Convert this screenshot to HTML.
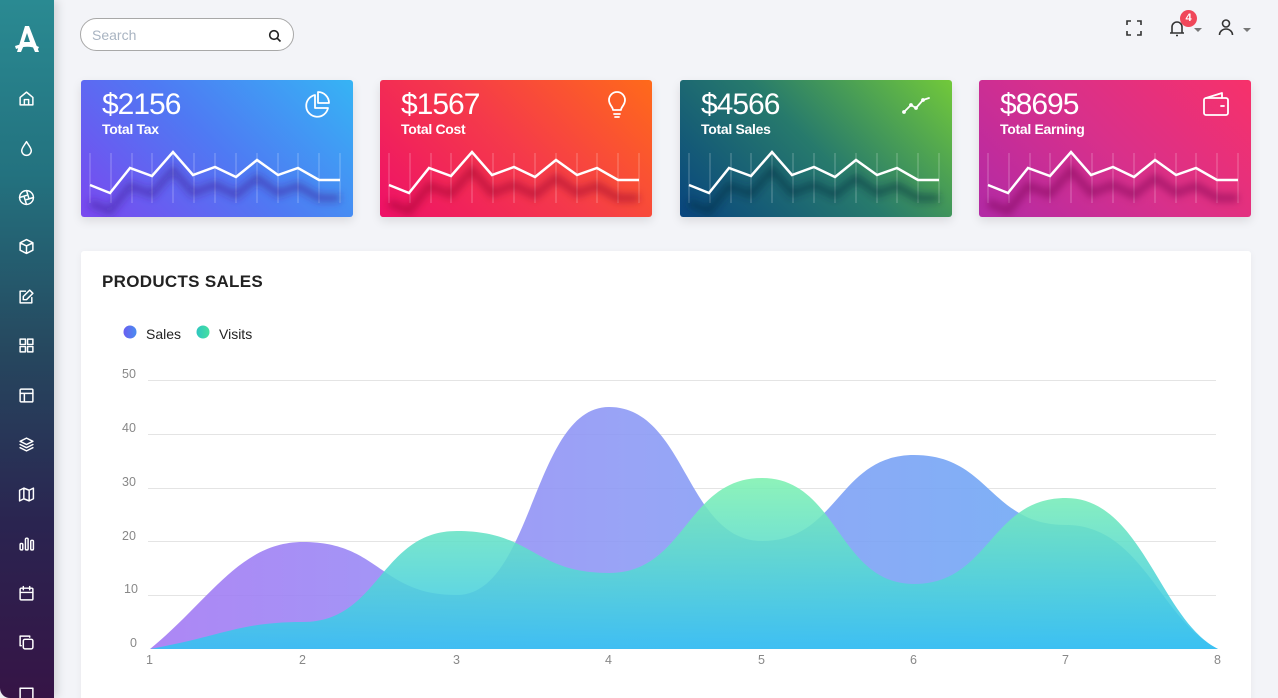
<!DOCTYPE html>
<html><head><meta charset="utf-8"><style>
*{margin:0;padding:0;box-sizing:border-box}
html,body{width:1278px;height:698px;overflow:hidden}
body{background:#f3f4f8;font-family:"Liberation Sans",sans-serif;position:relative}
.side{position:absolute;left:0;top:0;width:54px;height:698px;border-radius:0 0 0 10px;background:linear-gradient(180deg,#2a8a92 0%,#23727f 25%,#26485f 50%,#2a2450 75%,#361446 100%);box-shadow:3px 0 10px rgba(0,0,0,.15)}
.side svg{position:absolute;left:18px;width:17px;height:17px;fill:none;stroke:#fff;stroke-width:1.4;stroke-linecap:round;stroke-linejoin:round}
.search{position:absolute;left:80px;top:18px;width:214px;height:33px;border:1px solid #a8a8a8;border-radius:17px;background:#fff}
.search span{position:absolute;left:11px;top:8px;font-size:14px;color:#a9b4c2}
.card{position:absolute;top:80px;width:272px;height:137px;border-radius:3px;box-shadow:0 4px 10px rgba(0,0,0,.1);overflow:hidden}
.card .v{position:absolute;left:21px;top:8px;color:#fff;font-size:30px;letter-spacing:-1px}
.card .l{position:absolute;left:21px;top:41px;color:#fff;font-size:14px;font-weight:bold;letter-spacing:-0.3px}
.card svg.sp{position:absolute;left:0;top:0}
.card svg.ic{position:absolute;right:20px;top:10px;width:30px;height:30px;fill:none;stroke:#fff;stroke-width:1.8;stroke-linecap:round;stroke-linejoin:round}
.chart{position:absolute;left:81px;top:251px;width:1170px;height:460px;background:#fff;border-radius:3px;box-shadow:0 2px 8px rgba(0,0,0,.05)}
.chart h2{position:absolute;left:21px;top:21px;font-size:17px;font-weight:bold;color:#222;letter-spacing:.3px}
</style></head><body>
<svg width="0" height="0" style="position:absolute"><defs><filter id="bl" x="-10%" y="-50%" width="120%" height="200%"><feGaussianBlur stdDeviation="4"/></filter></defs></svg>
<div class="side">
<svg style="left:12px;top:24px;width:30px;height:30px;stroke:none;fill:#fff" viewBox="0 0 30 30"><path d="M13 2h4l10 26h-4l-3-7h-8l-3 7H5z M12 18h6l-3-9z"/><path d="M3 22c8-3 16-3 24 1l-1 2c-7-3-14-3-22 0z"/></svg>
<svg style="top:90px" viewBox="0 0 16 16"><path d="M2 7l6-5 6 5v7H2z M6 14V9h4v5"/></svg>
<svg style="top:140px" viewBox="0 0 16 16"><path d="M8 1.5C6 5 3.5 7.5 3.5 10a4.5 4.5 0 009 0C12.5 7.5 10 5 8 1.5z"/></svg>
<svg style="top:189px" viewBox="0 0 16 16"><circle cx="8" cy="8" r="6.5"/><path d="M8 1.5L10 8M14.5 8L8 10M8 14.5L6 8M1.5 8L8 6"/></svg>
<svg style="top:238px" viewBox="0 0 16 16"><path d="M8 1.5l6 3v7l-6 3-6-3v-7z M2 4.5l6 3 6-3 M8 7.5v7"/></svg>
<svg style="top:288px" viewBox="0 0 16 16"><path d="M13 9v5H2V3h5 M11 2l3 3-6 6H5V8z"/></svg>
<svg style="top:337px" viewBox="0 0 16 16"><rect x="2" y="2" width="5" height="5"/><rect x="9" y="2" width="5" height="5"/><rect x="2" y="9" width="5" height="5"/><rect x="9" y="9" width="5" height="5"/></svg>
<svg style="top:387px" viewBox="0 0 16 16"><rect x="2" y="2" width="12" height="12" rx="1"/><path d="M2 6h12M6 6v8"/></svg>
<svg style="top:436px" viewBox="0 0 16 16"><path d="M8 2l6 3-6 3-6-3z M2 8l6 3 6-3 M2 11l6 3 6-3"/></svg>
<svg style="top:486px" viewBox="0 0 16 16"><path d="M1.5 4l4-2 5 2 4-2v10l-4 2-5-2-4 2z M5.5 2v10M10.5 4v10"/></svg>
<svg style="top:535px" viewBox="0 0 16 16"><rect x="2" y="8" width="2.5" height="6" rx="1"/><rect x="7" y="3" width="2.5" height="11" rx="1"/><rect x="12" y="5" width="2.5" height="9" rx="1"/></svg>
<svg style="top:585px" viewBox="0 0 16 16"><rect x="2" y="3" width="12" height="11" rx="1"/><path d="M2 7h12M5 1.5v3M11 1.5v3"/></svg>
<svg style="top:634px" viewBox="0 0 16 16"><rect x="5" y="5" width="9" height="9" rx="1.5"/><path d="M11 3V2H2v9h1"/></svg>
<svg style="top:684px" viewBox="0 0 16 16"><path d="M2 14V4h12v10"/></svg>
</div>

<div class="search"><span>Search</span>
<svg style="position:absolute;right:11px;top:10px" width="14" height="14" viewBox="0 0 14 14" fill="none" stroke="#222" stroke-width="1.6"><circle cx="6" cy="6" r="4.3"/><path d="M9.2 9.2L12.5 12.5"/></svg></div>

<svg style="position:absolute;left:1126px;top:20px" width="16" height="16" viewBox="0 0 16 16" fill="none" stroke="#333" stroke-width="1.6"><path d="M1 5V1h4M11 1h4v4M15 11v4h-4M5 15H1v-4"/></svg>
<svg style="position:absolute;left:1168px;top:18px" width="20" height="20" viewBox="0 0 20 20" fill="none" stroke="#333" stroke-width="1.6"><path d="M4 15V9a5 5 0 0110 0v6h2H2h2M8 17.5h2"/></svg>
<div style="position:absolute;left:1180px;top:10px;width:17px;height:17px;border-radius:50%;background:#f0475a;color:#fff;font-size:11px;font-weight:bold;text-align:center;line-height:17px">4</div>
<div style="position:absolute;left:1194px;top:28px;border:4px solid transparent;border-top:4px solid #777"></div>
<svg style="position:absolute;left:1217px;top:18px" width="18" height="18" viewBox="0 0 18 18" fill="none" stroke="#333" stroke-width="1.6"><circle cx="9" cy="5.5" r="3.5"/><path d="M2.5 17a6.5 6 0 0113 0"/></svg>
<div style="position:absolute;left:1243px;top:28px;border:4px solid transparent;border-top:4px solid #777"></div>

<div class="card" style="left:81px;background:linear-gradient(45deg,#7a48ef,#4f79f3 50%,#36b4f4)">
<svg class="sp" width="272" height="137"><g stroke="rgba(255,255,255,.3)" stroke-width="1"><path d="M9 73v50M30 73v50M51 73v50M71 73v50M92 73v50M113 73v50M134 73v50M155 73v50M176 73v50M197 73v50M217 73v50M238 73v50M259 73v50"/></g><polyline points="9,113 29,121 49,96 71,104 92,80 112,103 134,95 155,105 176,88 197,103 217,96 238,108 259,108" fill="none" stroke="rgba(60,30,150,.5)" stroke-width="8" filter="url(#bl)" transform="translate(0,10)"/><polyline points="9,105 29,113 49,88 71,96 92,72 112,95 134,87 155,97 176,80 197,95 217,88 238,100 259,100" fill="none" stroke="#fff" stroke-width="2.5"/></svg>
<div class="v">$2156</div><div class="l">Total Tax</div>
<svg class="ic" viewBox="0 0 30 30"><path d="M12 5a11 11 0 1 0 13 13H12z"/><path d="M15 2a11 11 0 0111 11H15z"/></svg></div>

<div class="card" style="left:380px;background:linear-gradient(45deg,#ee1068,#f53a4a 50%,#ff6a1a)">
<svg class="sp" width="272" height="137"><g stroke="rgba(255,255,255,.3)"><path d="M9 73v50M30 73v50M51 73v50M71 73v50M92 73v50M113 73v50M134 73v50M155 73v50M176 73v50M197 73v50M217 73v50M238 73v50M259 73v50"/></g><polyline points="9,113 29,121 49,96 71,104 92,80 112,103 134,95 155,105 176,88 197,103 217,96 238,108 259,108" fill="none" stroke="rgba(150,0,40,.5)" stroke-width="8" filter="url(#bl)" transform="translate(0,10)"/><polyline points="9,105 29,113 49,88 71,96 92,72 112,95 134,87 155,97 176,80 197,95 217,88 238,100 259,100" fill="none" stroke="#fff" stroke-width="2.5"/></svg>
<div class="v">$1567</div><div class="l">Total Cost</div>
<svg class="ic" viewBox="0 0 30 30"><path d="M11 20c0-3-4-5-4-10a8 8 0 0116 0c0 5-4 7-4 10z M12 24h6M13 27h4"/></svg></div>

<div class="card" style="left:680px;background:linear-gradient(45deg,#08457e,#277a6c 50%,#72c93a)">
<svg class="sp" width="272" height="137"><g stroke="rgba(255,255,255,.3)"><path d="M9 73v50M30 73v50M51 73v50M71 73v50M92 73v50M113 73v50M134 73v50M155 73v50M176 73v50M197 73v50M217 73v50M238 73v50M259 73v50"/></g><polyline points="9,113 29,121 49,96 71,104 92,80 112,103 134,95 155,105 176,88 197,103 217,96 238,108 259,108" fill="none" stroke="rgba(0,40,60,.5)" stroke-width="8" filter="url(#bl)" transform="translate(0,10)"/><polyline points="9,105 29,113 49,88 71,96 92,72 112,95 134,87 155,97 176,80 197,95 217,88 238,100 259,100" fill="none" stroke="#fff" stroke-width="2.5"/></svg>
<div class="v">$4566</div><div class="l">Total Sales</div>
<svg class="ic" viewBox="0 0 30 30"><path d="M2 22l7-7 5 3 7-8 6-2"/><circle cx="2" cy="22" r="1"/><circle cx="9" cy="15" r="1"/><circle cx="14" cy="18" r="1"/><circle cx="21" cy="10" r="1"/></svg></div>

<div class="card" style="left:979px;background:linear-gradient(45deg,#b22aa6,#d9308a 50%,#f7316a)">
<svg class="sp" width="272" height="137"><g stroke="rgba(255,255,255,.3)"><path d="M9 73v50M30 73v50M51 73v50M71 73v50M92 73v50M113 73v50M134 73v50M155 73v50M176 73v50M197 73v50M217 73v50M238 73v50M259 73v50"/></g><polyline points="9,113 29,121 49,96 71,104 92,80 112,103 134,95 155,105 176,88 197,103 217,96 238,108 259,108" fill="none" stroke="rgba(120,0,80,.5)" stroke-width="8" filter="url(#bl)" transform="translate(0,10)"/><polyline points="9,105 29,113 49,88 71,96 92,72 112,95 134,87 155,97 176,80 197,95 217,88 238,100 259,100" fill="none" stroke="#fff" stroke-width="2.5"/></svg>
<div class="v">$8695</div><div class="l">Total Earning</div>
<svg class="ic" viewBox="0 0 30 30"><rect x="3" y="8" width="24" height="17" rx="2"/><path d="M5 8l16-5v5M20 16h3"/></svg></div>

<div class="chart"><h2>PRODUCTS SALES</h2></div>
<svg style="position:absolute;left:0;top:0" width="1278" height="698">
<defs>
<linearGradient id="s" x1="0" x2="1" y1="0" y2="0"><stop offset="0" stop-color="#a479f4"/><stop offset=".45" stop-color="#8d9af5"/><stop offset="1" stop-color="#62aef4"/></linearGradient>
<linearGradient id="v" x1="0" x2="0" y1="0" y2="1"><stop offset="0" stop-color="#7ef1b0"/><stop offset="1" stop-color="#33c2f2"/></linearGradient>
<linearGradient id="d1" x1="0" x2="1"><stop offset="0" stop-color="#6a5ef0"/><stop offset="1" stop-color="#4a8cf0"/></linearGradient>
<linearGradient id="d2" x1="0" x2="1"><stop offset="0" stop-color="#2ec6c0"/><stop offset="1" stop-color="#46e0a0"/></linearGradient>
</defs>
<circle cx="130" cy="332" r="6.5" fill="url(#d1)"/><text x="146" y="339" font-size="14" fill="#222" font-family="Liberation Sans">Sales</text>
<circle cx="203" cy="332" r="6.5" fill="url(#d2)"/><text x="219" y="339" font-size="14" fill="#222" font-family="Liberation Sans">Visits</text>
<g stroke="#e4e4e4" stroke-width="1"><path d="M148 380.5H1216M148 434.5H1216M148 488.5H1216M148 541.5H1216M148 595.5H1216"/></g>
<g font-size="12.5" fill="#888" font-family="Liberation Sans"><text x="122" y="378">50</text><text x="122" y="432">40</text><text x="122" y="486">30</text><text x="122" y="540">20</text><text x="124" y="593">10</text><text x="130" y="647">0</text>
<text x="146" y="664">1</text><text x="299" y="664">2</text><text x="453" y="664">3</text><text x="605" y="664">4</text><text x="758" y="664">5</text><text x="910" y="664">6</text><text x="1062" y="664">7</text><text x="1214" y="664">8</text></g>
<path d="M150,649 C210,600 240,542 303,542 C380,542 380,595 457,595 C533,595 533,407 609,407 C686,407 686,541 762,541 C838,541 838,455 914,455 C990,455 990,525 1066,525 C1142,525 1160,620 1218,649Z" fill="url(#s)" opacity=".9"/>
<path d="M150,649 C226,635 240,622 303,622 C380,622 380,531 457,531 C533,531 533,573 609,573 C686,573 686,478 762,478 C838,478 838,584 914,584 C990,584 990,498 1066,498 C1142,498 1160,620 1218,649Z" fill="url(#v)" opacity=".88"/>
</svg>
</body></html>
